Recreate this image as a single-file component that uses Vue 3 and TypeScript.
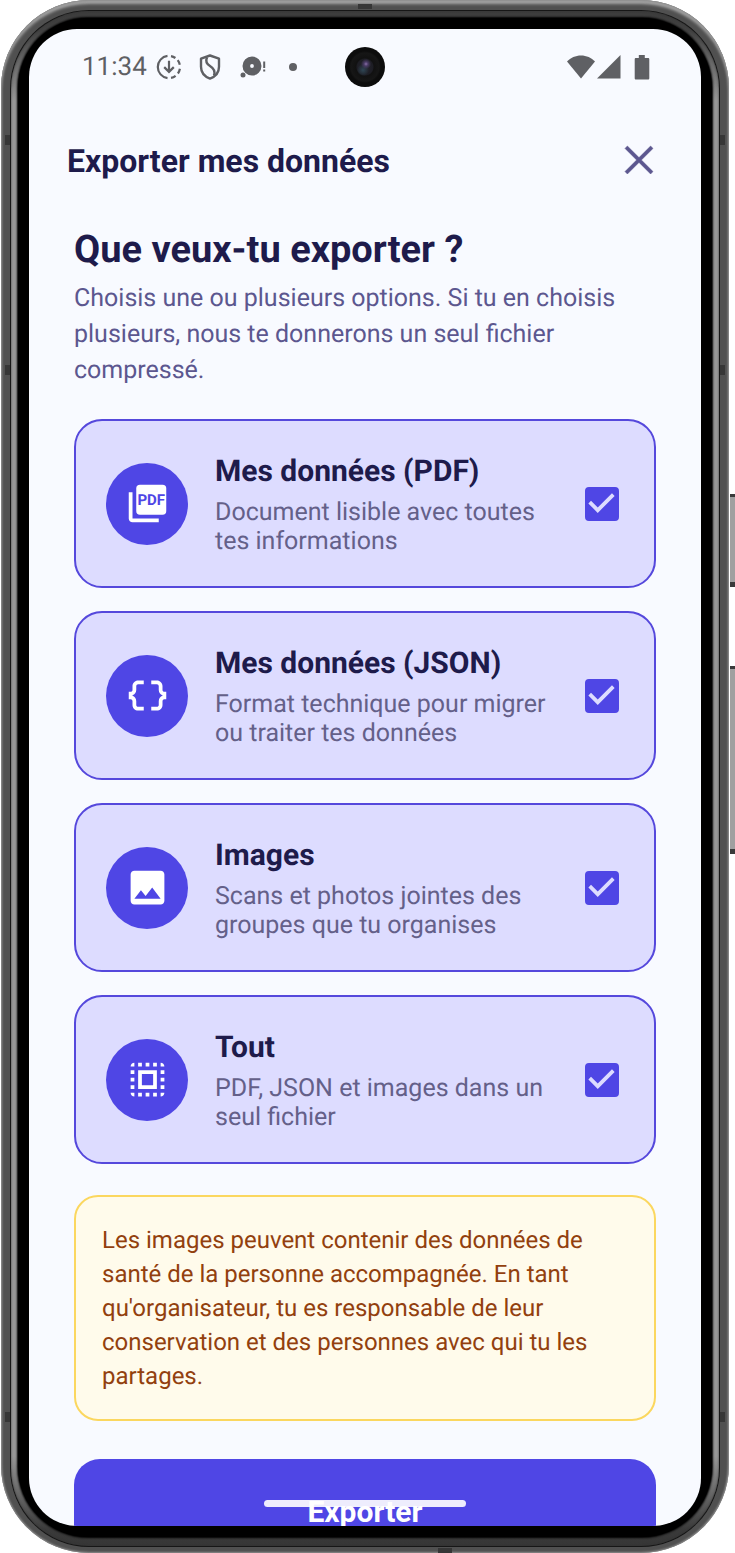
<script setup lang="ts">
import { computed, ref } from 'vue'

type Format = 'pdf' | 'json' | 'images'

interface Option {
  id: Format | 'all'
  title: string
  description: string
}

const options: Option[] = [
  { id: 'pdf', title: 'Mes données (PDF)', description: 'Document lisible avec toutes tes informations' },
  { id: 'json', title: 'Mes données (JSON)', description: 'Format technique pour migrer ou traiter tes données' },
  { id: 'images', title: 'Images', description: 'Scans et photos jointes des groupes que tu organises' },
  { id: 'all', title: 'Tout', description: 'PDF, JSON et images dans un seul fichier' },
]

const formats: Format[] = ['pdf', 'json', 'images']
const selected = ref<Format[]>([...formats])
const allSelected = computed(() => selected.value.length === formats.length)

function isChecked(id: Option['id']): boolean {
  return id === 'all' ? allSelected.value : selected.value.includes(id)
}

function toggle(id: Option['id']): void {
  if (id === 'all') {
    selected.value = allSelected.value ? [] : [...formats]
  } else if (selected.value.includes(id)) {
    selected.value = selected.value.filter((f) => f !== id)
  } else {
    selected.value = [...selected.value, id]
  }
}
</script>

<template>
  <div class="stage">
    <div class="device">
      <i class="band band-left band-high"></i>
      <i class="band band-left band-mid"></i>
      <i class="band band-left band-low"></i>
      <i class="band band-right band-high"></i>
      <i class="band band-right band-mid"></i>
      <i class="band band-right band-low"></i>
      <i class="band band-top"></i>
      <i class="band band-bottom"></i>
      <div class="seam">
        <div class="rail">
          <div class="bezel">
            <div class="screen">
              <div class="status">
                <span class="time">11:34</span>
                <svg class="status-download" width="26" height="26" viewBox="0 0 26 26" fill="none" stroke="#5f6064" stroke-width="2.2">
                  <path d="M11.5 1.9A11.2 11.2 0 0 0 11.5 24.1" />
                  <path d="M15 2.1a11 11 0 0 1 4.4 1.9M21.7 6.2a11 11 0 0 1 2.1 4.6M23.9 14.8a11 11 0 0 1-2 4.7M19.6 21.8A11 11 0 0 1 15 23.9" />
                  <path d="M13 6.8v11M8.2 13.1l4.8 4.8 4.8-4.8" />
                </svg>
                <svg class="status-shield" width="22" height="26" viewBox="0 0 22 26" fill="none" stroke="#5f6064" stroke-width="2.4" stroke-linejoin="round">
                  <path d="M11 1.5 20 4.7v8.1c0 5.6-3.8 9.9-9 11.8-5.2-1.9-9-6.2-9-11.8V4.7z" />
                  <path d="M8 3.2C6.4 7.1 7.2 9.7 11 12c4.3 2.6 5.4 5.1 4 9.4" />
                </svg>
                <svg class="status-disc" width="27" height="24" viewBox="0 0 27 24" fill="#5f6064">
                  <path fill-rule="evenodd" d="M12 1.5a9.5 9.5 0 1 0 0 19 9.5 9.5 0 0 0 0-19zm0 7.6a1.9 1.9 0 1 1 0 3.8 1.9 1.9 0 0 1 0-3.8z" />
                  <circle cx="3" cy="20" r="2.5" />
                  <path d="M23.2 6.5h2v6.5h-2zM23.2 14.5h2v2h-2z" />
                </svg>
                <i class="status-dot"></i>
                <span class="status-right">
                  <svg width="28" height="24" viewBox="0 0 28 24" fill="#5f6064"><path d="M14 23.5 0 6.5C3.6 2.8 8.6.5 14 .5s10.4 2.3 14 6z" /></svg>
                  <svg width="24" height="24" viewBox="0 0 24 24" fill="#5f6064"><path d="M0 23.5 23.5 0v23.5z" /></svg>
                  <svg class="status-battery" width="16" height="25" viewBox="0 0 16 25" fill="#5f6064"><path d="M4.8 0h6v3h3.2c.8 0 1.3.5 1.3 1.3v19c0 .8-.5 1.3-1.3 1.3H2c-.8 0-1.3-.5-1.3-1.3v-19C.7 3.5 1.2 3 2 3h2.8z" /></svg>
                </span>
                <i class="camera"></i>
              </div>

              <header class="topbar">
                <h1>Exporter mes données</h1>
                <button type="button" class="close" aria-label="Fermer">
                  <svg width="48" height="48" viewBox="0 0 24 24" fill="#5c578f" stroke="#5c578f" stroke-width=".25">
                    <path d="M19 6.2 17.8 5 12 10.8 6.2 5 5 6.2 10.8 12 5 17.8 6.2 19 12 13.2 17.8 19 19 17.8 13.2 12z" />
                  </svg>
                </button>
              </header>

              <main class="content">
                <h2>Que veux-tu exporter ?</h2>
                <p class="intro">Choisis une ou plusieurs options. Si tu en choisis plusieurs, nous te donnerons un seul fichier compressé.</p>

                <div class="options">
                  <label
                    v-for="option in options"
                    :key="option.id"
                    class="card"
                    :class="{ selected: isChecked(option.id) }"
                    :for="`option-${option.id}`"
                  >
                    <span class="badge">
                      <svg width="45" height="45" viewBox="0 0 24 24" fill="#fff">
                        <template v-if="option.id === 'pdf'">
                          <rect x="6" y="2" width="16" height="16" rx="2" />
                          <path d="M4 6H2v14c0 1.1.9 2 2 2h14v-2H4z" />
                          <text class="badge-text" x="14" y="12.9" text-anchor="middle">PDF</text>
                        </template>
                        <path
                          v-else-if="option.id === 'json'"
                          d="M4 7v2c0 .55-.45 1-1 1H2v4h1c.55 0 1 .45 1 1v2c0 1.65 1.35 3 3 3h3v-2H7c-.55 0-1-.45-1-1v-2c0-1.3-.84-2.42-2-2.83v-.34C5.16 11.42 6 10.3 6 9V7c0-.55.45-1 1-1h3V4H7C5.35 4 4 5.35 4 7zM21 10c-.55 0-1-.45-1-1V7c0-1.65-1.35-3-3-3h-3v2h3c.55 0 1 .45 1 1v2c0 1.3.84 2.42 2 2.83v.34c-1.16.41-2 1.52-2 2.83v2c0 .55-.45 1-1 1h-3v2h3c1.65 0 3-1.35 3-3v-2c0-.55.45-1 1-1h1v-4h-1z"
                        />
                        <path
                          v-else-if="option.id === 'images'"
                          d="M21 19V5c0-1.1-.9-2-2-2H5c-1.1 0-2 .9-2 2v14c0 1.1.9 2 2 2h14c1.1 0 2-.9 2-2zM8.5 13.5l2.5 3.01L14.5 12l4.5 6H5l3.5-4.5z"
                        />
                        <path
                          v-else
                          d="M3 5h2V3c-1.1 0-2 .9-2 2zm0 8h2v-2H3v2zm4 8h2v-2H7v2zM3 9h2V7H3v2zm10-6h-2v2h2V3zm6 0v2h2c0-1.1-.9-2-2-2zM5 21v-2H3c0 1.1.9 2 2 2zm-2-4h2v-2H3v2zM9 3H7v2h2V3zm2 18h2v-2h-2v2zm8-8h2v-2h-2v2zm0 8c1.1 0 2-.9 2-2h-2v2zm0-12h2V7h-2v2zm0 8h2v-2h-2v2zm-4 4h2v-2h-2v2zm0-16h2V3h-2v2zM7 17h10V7H7v10zm2-8h6v6H9V9z"
                        />
                      </svg>
                    </span>
                    <span class="card-text">
                      <span class="card-title">{{ option.title }}</span>
                      <span class="card-desc">{{ option.description }}</span>
                    </span>
                    <span class="check">
                      <input
                        :id="`option-${option.id}`"
                        type="checkbox"
                        :checked="isChecked(option.id)"
                        @change="toggle(option.id)"
                      />
                      <svg v-if="isChecked(option.id)" width="45" height="45" viewBox="0 0 24 24" fill="#dddcff">
                        <path d="M10 17l-5-5 1.41-1.41L10 14.17l7.59-7.59L19 8l-9 9z" />
                      </svg>
                    </span>
                  </label>
                </div>

                <p class="notice">Les images peuvent contenir des données de santé de la personne accompagnée. En tant qu'organisateur, tu es responsable de leur conservation et des personnes avec qui tu les partages.</p>

                <button type="button" class="submit">Exporter</button>
              </main>
              <i class="home-bar"></i>
            </div>
          </div>
        </div>
      </div>
    </div>
    <div class="keys">
      <i class="key key-power"></i>
      <i class="key key-volume"></i>
    </div>
  </div>
</template>

<style>
body {
  margin: 0;
  background: #fff;
}
</style>

<style scoped>
* {
  box-sizing: border-box;
}

.stage {
  display: flex;
  height: 100vh;
  padding-left: 1px;
  font-family: Roboto, "Liberation Sans", sans-serif;
  text-rendering: geometricPrecision;
  color: #1e1b4b;
}

/* Phone body: metal edge, dark seam, rail highlight, black bezel */
.device {
  position: relative;
  flex: 1;
  min-width: 0;
  padding: 10px 9px 6px;
  border-radius: 88px;
  background: #505050;
  box-shadow: inset 0 0 2px 1px #8c8c8c, inset 0 4px 3px #a5a5a5;
}

.seam {
  height: 100%;
  padding: 1px;
  border-radius: 79px;
  background: #161616;
}

.rail {
  height: 100%;
  padding: 7px 7px 9px;
  border-radius: 78px;
  background: linear-gradient(#3c3c3c, #424242 20px, #969696 90px, #969696 calc(100% - 90px), #3a3a3a calc(100% - 16px), #363636);
  box-shadow: inset 0 0 2px #333;
}

.bezel {
  height: 100%;
  padding: 11px;
  border-radius: 70px;
  background: #000;
  box-shadow: 0 0 2px 1px #000;
}

.screen {
  position: relative;
  display: flex;
  flex-direction: column;
  height: 100%;
  overflow: hidden;
  border-radius: 48px;
  background: #f8faff;
}

.band {
  position: absolute;
  width: 5px;
  height: 10px;
  background: #363636;
}

.band-left { left: 4px; }
.band-right { right: 4px; }
.band-high { top: 135px; }
.band-mid { top: 365px; }
.band-low { bottom: 131px; }

.band-top {
  top: 4px;
  left: 49%;
  width: 14px;
  height: 5px;
}

.band-bottom {
  bottom: 0;
  left: 60%;
  width: 14px;
  height: 5px;
}

.keys {
  display: flex;
  flex-direction: column;
  gap: 79px;
  width: 6px;
  padding: 494px 0 0 1px;
}

.key {
  border: solid #3a3a3a;
  border-width: 3px 0 5px;
  background: #a0a0a0;
}

.key-power { height: 93px; }
.key-volume { height: 188px; }

.status {
  position: relative;
  display: flex;
  flex: none;
  align-items: center;
  height: 76px;
  padding: 0 51px 0 53px;
}

.time {
  font-size: 26px;
  line-height: 32px;
  color: #5f6064;
}

.status-download { margin-left: 9px; }
.status-shield { margin-left: 17px; }
.status-disc { margin-left: 19px; }

.status-dot {
  width: 8px;
  height: 8px;
  margin-left: 22px;
  border-radius: 50%;
  background: #5f6064;
}

.status-right {
  display: flex;
  align-items: center;
  gap: 2px;
  margin-left: auto;
}

.status-battery { margin-left: 11px; }

.camera {
  position: absolute;
  top: 18px;
  left: 50%;
  width: 40px;
  height: 40px;
  margin-left: -20px;
  border-radius: 50%;
  background:
    radial-gradient(circle at 21px 17px, #8a6fa8 0, #4a3c66 2px, transparent 5px),
    radial-gradient(circle at 18px 23px, #2f4654 0, transparent 6px),
    radial-gradient(circle at 20px 20px, #25252e 0, #1d1d24 8px, #111 9px, #161616 14px, #0c0c0c 16px);
}

.topbar {
  display: flex;
  flex: none;
  align-items: center;
  justify-content: space-between;
  padding: 31px 38px 0;
}

h1,
h2,
p {
  margin: 0;
}

h1 {
  padding-top: 2px;
  font-size: 32px;
  font-weight: 700;
  line-height: 40px;
}

.close {
  display: flex;
  padding: 0;
  border: 0;
  background: none;
  cursor: pointer;
}

.content {
  display: flex;
  flex-direction: column;
  padding: 43px 45px 0;
}

h2 {
  margin-bottom: 8px;
  font-size: 38px;
  font-weight: 700;
  line-height: 46px;
}

.intro {
  margin-bottom: 30px;
  font-size: 25px;
  line-height: 36px;
  color: #5c578f;
}

.options {
  display: flex;
  flex-direction: column;
  gap: 23px;
}

.card {
  display: flex;
  align-items: center;
  padding: 30px;
  border: 2px solid #d5d5ea;
  border-radius: 28px;
  background: #fff;
  cursor: pointer;
}

.card.selected {
  border-color: #5548dc;
  background: #dddcff;
}

.badge {
  display: grid;
  flex: none;
  place-items: center;
  width: 82px;
  height: 82px;
  border-radius: 50%;
  background: #4f46e5;
}

.badge-text {
  font-size: 8px;
  font-weight: 700;
  fill: #4f46e5;
}

.card-text {
  display: flex;
  flex: 1;
  flex-direction: column;
  gap: 5px;
  min-width: 0;
  margin: 0 27px;
}

.card-title {
  font-size: 30px;
  font-weight: 700;
  line-height: 42px;
}

.card-desc {
  font-size: 25px;
  line-height: 29px;
  color: #646089;
}

.check {
  display: grid;
  flex: none;
  place-items: center;
  width: 45px;
  height: 45px;
}

.check > * {
  grid-area: 1 / 1;
}

.check input {
  width: 34px;
  height: 34px;
  margin: 0;
  border: 4px solid #4f46e5;
  border-radius: 4px;
  appearance: none;
}

.check input:checked {
  background: #4f46e5;
}

.check svg {
  z-index: 1;
  pointer-events: none;
}

.notice {
  margin-top: 31px;
  padding: 26px;
  border: 2px solid #fbd75f;
  border-radius: 24px;
  font-size: 24px;
  line-height: 34px;
  color: #92400e;
  background: #fffbeb;
}

.submit {
  height: 104px;
  margin-top: 38px;
  border: 0;
  border-radius: 26px;
  font-family: inherit;
  font-size: 30px;
  font-weight: 700;
  color: #fff;
  background: #4f46e5;
  cursor: pointer;
}

.home-bar {
  position: absolute;
  bottom: 19px;
  left: 35%;
  width: 30%;
  height: 7px;
  border-radius: 4px;
  background: rgb(255 255 255 / 90%);
}
</style>
